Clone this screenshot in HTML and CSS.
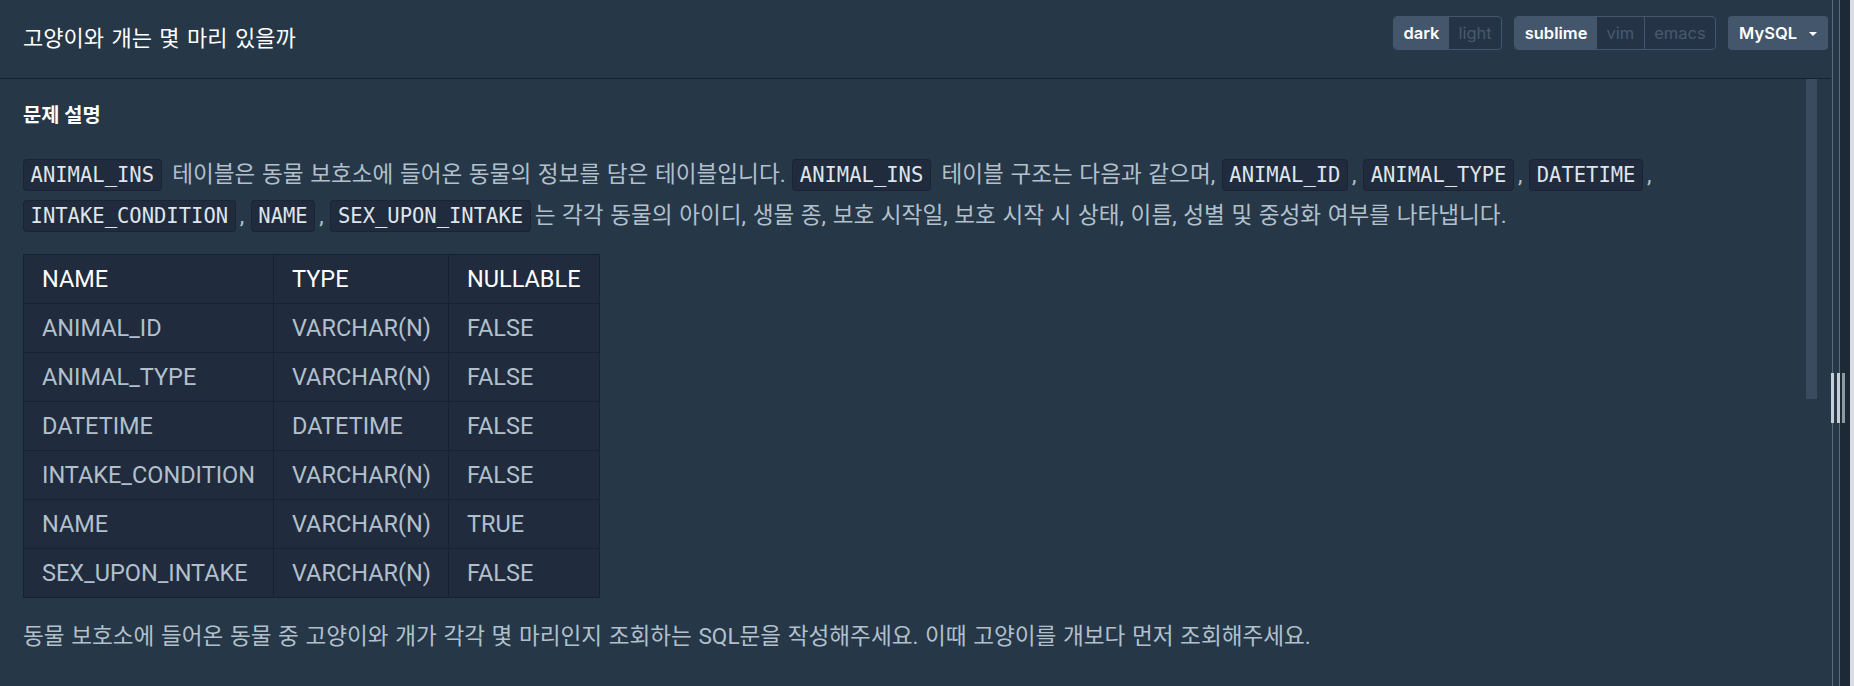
FILE: index.html
```html
<!DOCTYPE html>
<html lang="ko">
<head>
<meta charset="utf-8">
<title>고양이와 개는 몇 마리 있을까</title>
<link rel="stylesheet" href="styles.css">
</head>
<body>
<div class="app">
  <div class="main">
    <header class="topbar">
      <h1 class="title">고양이와 개는 몇 마리 있을까</h1>
      <div class="controls">
        <div class="seg">
          <span class="seg-item active">dark</span>
          <span class="seg-item">light</span>
        </div>
        <div class="seg">
          <span class="seg-item active">sublime</span>
          <span class="seg-item">vim</span>
          <span class="seg-item sep">emacs</span>
        </div>
        <div class="dropdown"><span>MySQL</span><span class="caret"></span></div>
      </div>
    </header>
    <div class="pane">
      <article class="desc">
        <h5 class="section-title">문제 설명</h5>
        <p class="para"><code>ANIMAL_INS</code> 테이블은 동물 보호소에 들어온 동물의 정보를 담은 테이블입니다. <code>ANIMAL_INS</code> 테이블 구조는 다음과 같으며, <code>ANIMAL_ID</code>, <code>ANIMAL_TYPE</code>, <code>DATETIME</code>, <code>INTAKE_CONDITION</code>, <code>NAME</code>, <code>SEX_UPON_INTAKE</code>는 각각 동물의 아이디, 생물 종, 보호 시작일, 보호 시작 시 상태, 이름, 성별 및 중성화 여부를 나타냅니다.</p>
        <table class="schema">
          <colgroup><col class="c1"><col class="c2"><col class="c3"></colgroup>
          <thead>
            <tr><th>NAME</th><th>TYPE</th><th>NULLABLE</th></tr>
          </thead>
          <tbody>
            <tr><td>ANIMAL_ID</td><td>VARCHAR(N)</td><td>FALSE</td></tr>
            <tr><td>ANIMAL_TYPE</td><td>VARCHAR(N)</td><td>FALSE</td></tr>
            <tr><td>DATETIME</td><td>DATETIME</td><td>FALSE</td></tr>
            <tr><td>INTAKE_CONDITION</td><td>VARCHAR(N)</td><td>FALSE</td></tr>
            <tr><td>NAME</td><td>VARCHAR(N)</td><td>TRUE</td></tr>
            <tr><td>SEX_UPON_INTAKE</td><td>VARCHAR(N)</td><td>FALSE</td></tr>
          </tbody>
        </table>
        <p class="para last">동물 보호소에 들어온 동물 중 고양이와 개가 각각 몇 마리인지 조회하는 SQL문을 작성해주세요. 이때 고양이를 개보다 먼저 조회해주세요.</p>
      </article>
      <div class="scroll-track"><div class="scroll-thumb"></div></div>
    </div>
  </div>
  <div class="gutter">
    <div class="g g-bg1"></div>
    <div class="g g-line"></div>
    <div class="g g-bg2"></div>
    <div class="g g-line"></div>
    <div class="g g-dark"></div>
    <div class="g g-edge"></div>
    <div class="grip">
      <span class="bar"></span><span class="bar"></span><span class="bar dim"></span>
    </div>
  </div>
</div>
</body>
</html>
```

FILE: styles.css
```css
html, body {
  margin: 0;
  padding: 0;
}
body {
  background: #263747;
  width: 1854px;
  height: 686px;
  overflow: hidden;
  font-family: Roboto, "Noto Sans CJK KR", sans-serif;
  color: #b2c0cc;
}
.app {
  display: flex;
  height: 686px;
}
.main {
  flex: 1;
  display: flex;
  flex-direction: column;
  min-width: 0;
}
.topbar {
  height: 78px;
  border-bottom: 1px solid #172130;
  display: flex;
  justify-content: space-between;
  align-items: flex-start;
  padding: 0 3px 0 23px;
  box-sizing: content-box;
}
.title {
  margin: 0;
  font-size: 22px;
  font-weight: 400;
  line-height: 77px;
  color: #ffffff;
  word-spacing: 2px;
}
.controls {
  display: flex;
  gap: 12px;
  padding-top: 16px;
  font-family: Inter, "Noto Sans", sans-serif;
  font-size: 16.5px;
}
.seg {
  display: flex;
  border: 1px solid #44566c;
  border-radius: 4px;
  overflow: hidden;
  background: #243446;
}
.seg-item {
  line-height: 32px;
  padding: 0 9.5px;
  color: #485a6d;
}
.seg-item.active {
  background: #44566c;
  color: #ffffff;
  font-weight: 600;
}
.seg-item.sep {
  border-left: 1px solid #44566c;
}
.dropdown {
  display: flex;
  align-items: center;
  gap: 12px;
  height: 34px;
  padding: 0 11px;
  background: #44566c;
  border-radius: 4px;
  color: #ffffff;
  font-weight: 600;
}
.caret {
  width: 0;
  height: 0;
  border-left: 4px solid transparent;
  border-right: 4px solid transparent;
  border-top: 4px solid #ffffff;
  margin-top: 1px;
}
.pane {
  flex: 1;
  display: flex;
  overflow: hidden;
}
.desc {
  flex: 1;
  padding: 23px 0 0 23px;
  min-width: 0;
}
.section-title {
  margin: 0;
  font-size: 19.8px;
  font-weight: 700;
  line-height: 27px;
  color: #ffffff;
}
.para {
  margin: 26px 0 0;
  font-size: 22.6px;
  line-height: 40.5px;
  word-spacing: 1px;
  color: #b2c0cc;
}
.para.last {
  margin-top: 19px;
}
code {
  font-family: "DejaVu Sans Mono", monospace;
  font-size: 20.5px;
  padding: 3px 6.6px;
  margin-right: 4px;
  background: #202b3d;
  border: 1px solid #1a2434;
  border-radius: 4px;
  color: #dfe5eb;
  word-spacing: 0;
}
.schema {
  margin-top: 18px;
  border-collapse: collapse;
  table-layout: fixed;
  width: 576px;
  background: #202b3d;
  border: 1px solid #172130;
  font-family: Roboto, sans-serif;
  font-size: 23.5px;
}
.schema .c1 { width: 250px; }
.schema .c2 { width: 175px; }
.schema .c3 { width: 151px; }
.schema th,
.schema td {
  border: 1px solid #172130;
  padding: 8px 18px;
  line-height: 32px;
  text-align: left;
  white-space: nowrap;
}
.schema th {
  font-weight: 400;
  color: #ffffff;
}
.schema td {
  color: #b2c0cc;
}
.scroll-track {
  width: 11px;
  margin-right: 14px;
  flex: none;
}
.scroll-thumb {
  height: 320px;
  background: #3a4a5f;
}
.gutter {
  position: relative;
  width: 23px;
  flex: none;
  display: flex;
}
.g { height: 100%; }
.g-bg1 { width: 1px; background: #263747; }
.g-line { width: 1px; background: #5b6b7c; }
.g-bg2 { width: 6px; background: #263747; }
.g-dark { width: 10px; background: #1e2936; }
.g-edge { width: 4px; background: #d8dee4; }
.grip {
  position: absolute;
  left: 0;
  top: 373px;
  display: flex;
  gap: 2.5px;
}
.bar {
  width: 3px;
  height: 50px;
  background: #c5ced6;
}
.bar.dim {
  background: #8e989f;
}
```
